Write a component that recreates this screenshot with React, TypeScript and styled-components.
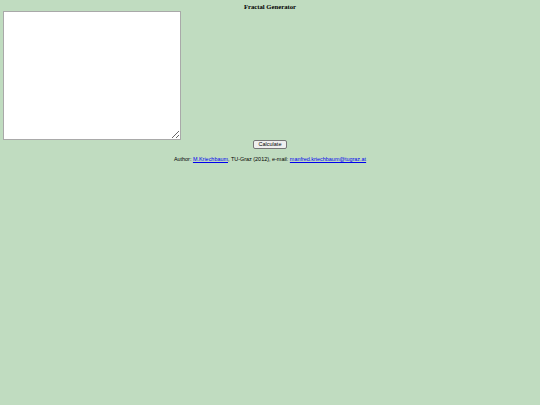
import styled, { createGlobalStyle } from "styled-components";

const GlobalStyle = createGlobalStyle`
  html, body {
    margin: 0;
    padding: 0;
    background: #c0dcc0;
  }
`;

export default function App() {
  return (
    <>
      <GlobalStyle />
      <Page>
        <Title>Fractal Generator</Title>
        <Editor />
        <ButtonRow>
          <CalcButton type="button">Calculate</CalcButton>
        </ButtonRow>
        <Credits>
          Author: <Link href="#">M.Kriechbaum</Link>, TU-Graz (2012), e-mail:{" "}
          <Link href="#">manfred.kriechbaum@tugraz.at</Link>
        </Credits>
      </Page>
    </>
  );
}

const Page = styled.div`
  width: 540px;
  height: 405px;
  box-sizing: border-box;
  padding: 3px 3px 0;
  display: flex;
  flex-direction: column;
  background: #c0dcc0;
`;

const Title = styled.div`
  font-family: "Liberation Serif", serif;
  font-weight: bold;
  font-size: 6.7px;
  line-height: 8px;
  text-align: center;
  color: #000;
`;

const Editor = styled.textarea`
  width: 178px;
  height: 129px;
  box-sizing: border-box;
  margin: 0;
  border: 1px solid #a9a9a9;
  background: #fff;
  resize: both;
`;

const ButtonRow = styled.div`
  display: flex;
  justify-content: center;
`;

const CalcButton = styled.button`
  width: 34px;
  height: 9px;
  padding: 0;
  margin: 0;
  box-sizing: border-box;
  font-family: "Liberation Sans", Arial, sans-serif;
  font-size: 5.5px;
  line-height: 7px;
  color: #000;
  background: #efefef;
  border: 1px solid #767676;
  border-radius: 2px;
`;

const Credits = styled.div`
  margin-top: 7px;
  font-family: "Liberation Sans", Arial, sans-serif;
  font-size: 5.45px;
  line-height: 6px;
  text-align: center;
  color: #000;
`;

const Link = styled.a`
  color: #0000ee;
  text-decoration: underline;
`;
